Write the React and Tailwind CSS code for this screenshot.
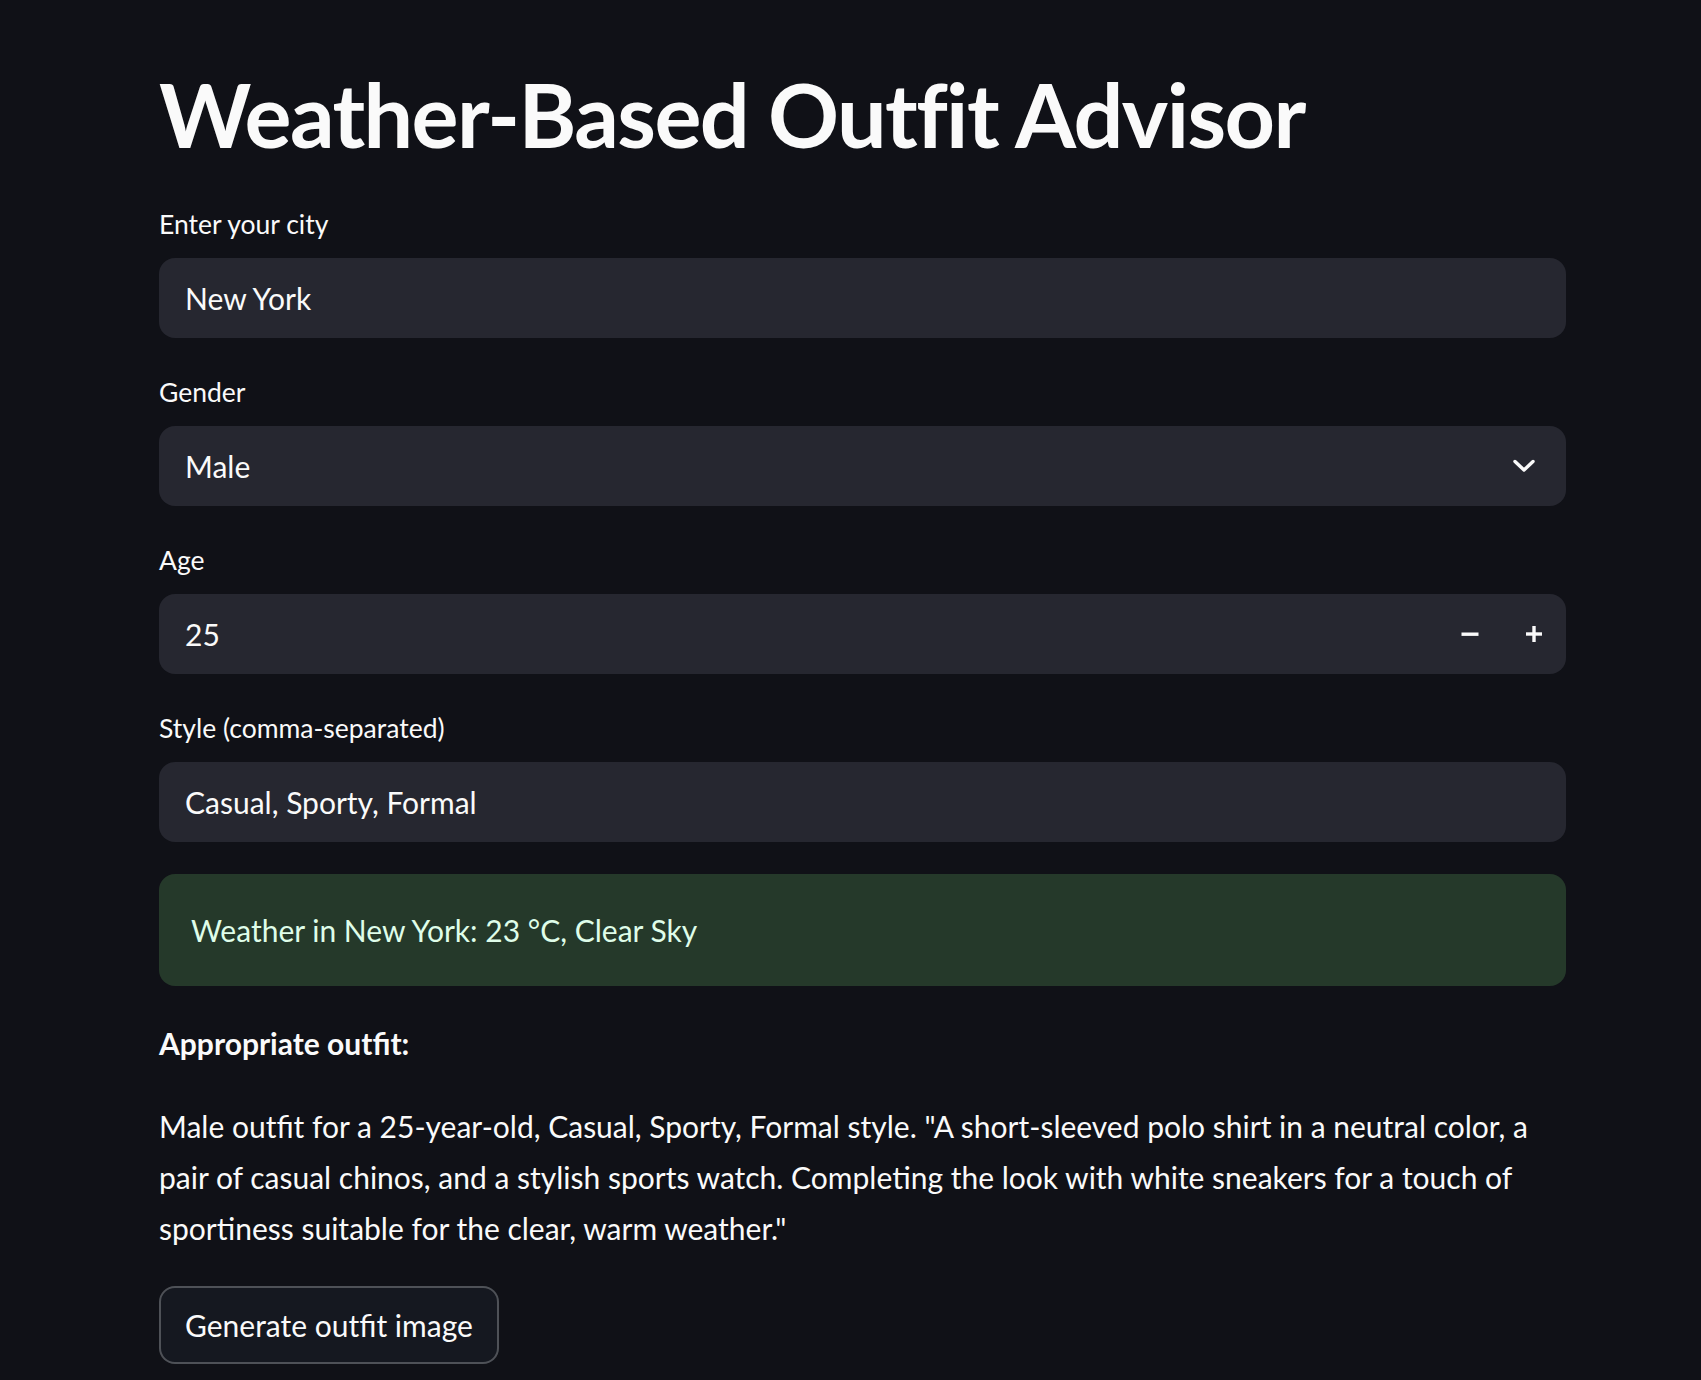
import { useState } from 'react';

function Label({ children }) {
	return (
		<div className="h-[48px] mb-[8px] pb-[3px] flex items-center text-[26.5px] text-[#fafafa]">
			{children}
		</div>
	);
}

function ChevronDown() {
	return (
		<svg width="22" height="14" viewBox="0 0 22 14" fill="none">
			<path d="M2 2.5 L11 11 L20 2.5" stroke="#fafafa" strokeWidth="3.4" strokeLinecap="round" strokeLinejoin="round" />
		</svg>
	);
}

export default function App() {
	const [city, setCity] = useState('New York');
	const [age, setAge] = useState(25);
	const [style, setStyle] = useState('Casual, Sporty, Formal');

	return (
		<div className="min-h-screen bg-[#101117] text-[#fafafa] [font-family:Lato,'Noto_Sans',sans-serif] pt-[60px] pl-[159px] pb-[40px]">
			<div className="w-[1407px] flex flex-col">
				<h1 className="text-[88px] leading-[108px] font-bold mb-[34px] tracking-[-0.018em]">
					Weather-Based Outfit Advisor
				</h1>

				<div className="mb-[32px]">
					<Label>Enter your city</Label>
					<input
						value={city}
						onChange={(e) => setCity(e.target.value)}
						className="w-full h-[80px] rounded-[16px] bg-[#262730] px-[26px] text-[30px] text-[#fafafa] outline-none"
					/>
				</div>

				<div className="mb-[32px]">
					<Label>Gender</Label>
					<div className="w-full h-[80px] rounded-[16px] bg-[#262730] pl-[26px] pr-[31px] flex items-center justify-between text-[30px]">
						<span>Male</span>
						<ChevronDown />
					</div>
				</div>

				<div className="mb-[32px]">
					<Label>Age</Label>
					<div className="w-full h-[80px] rounded-[16px] bg-[#262730] flex items-center text-[30px]">
						<input
							value={age}
							onChange={(e) => setAge(e.target.value)}
							className="flex-1 h-full bg-transparent pl-[26px] text-[30px] text-[#fafafa] outline-none"
						/>
						<button
							onClick={() => setAge((a) => Number(a) - 1)}
							className="w-[64px] h-full flex items-center justify-center"
						>
							<svg width="18" height="18" viewBox="0 0 18 18">
								<rect x="0.5" y="7.5" width="17" height="3.4" fill="#fafafa" />
							</svg>
						</button>
						<button
							onClick={() => setAge((a) => Number(a) + 1)}
							className="w-[64px] h-full flex items-center justify-center"
						>
							<svg width="18" height="18" viewBox="0 0 18 18">
								<rect x="1" y="7.3" width="16" height="3.4" fill="#fafafa" />
								<rect x="7.3" y="1" width="3.4" height="16" fill="#fafafa" />
							</svg>
						</button>
					</div>
				</div>

				<div className="mb-[32px]">
					<Label>Style (comma-separated)</Label>
					<input
						value={style}
						onChange={(e) => setStyle(e.target.value)}
						className="w-full h-[80px] rounded-[16px] bg-[#262730] px-[26px] text-[30px] text-[#fafafa] outline-none"
					/>
				</div>

				<div className="h-[112px] mb-[32px] rounded-[16px] bg-[#25392a] px-[32px] flex items-center text-[30px] text-[#dffde9]">
					Weather in New York: 23 °C, Clear Sky
				</div>

				<p className="text-[30px] leading-[51px] font-bold mb-[32px]">Appropriate outfit:</p>

				<p className="text-[30px] leading-[51px] mb-[32px]">
					Male outfit for a 25-year-old, Casual, Sporty, Formal style. "A short-sleeved polo shirt in a neutral color, a pair of casual chinos, and a stylish sports watch. Completing the look with white sneakers for a touch of sportiness suitable for the clear, warm weather."
				</p>

				<div>
					<button className="h-[78px] rounded-[16px] border-2 border-[#fafafa]/25 bg-[#151820] px-[24px] text-[30px] text-[#fafafa]">
						Generate outfit image
					</button>
				</div>
			</div>
		</div>
	);
}
